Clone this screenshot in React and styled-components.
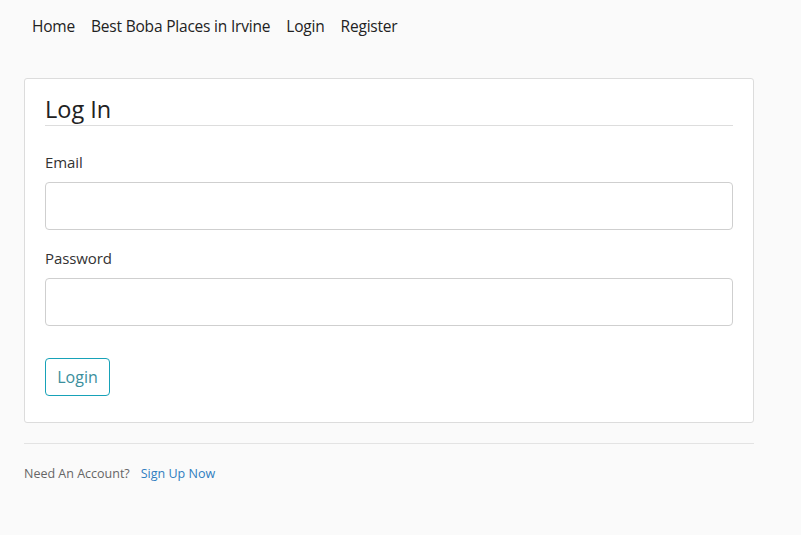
import React from "react";
import styled, { createGlobalStyle } from "styled-components";

const Global = createGlobalStyle`
  html, body { margin: 0; padding: 0; background: #fafafa; }
  body { font-family: "Open Sans", "Noto Sans", sans-serif; color: #212529; }
  * { box-sizing: border-box; }
`;

const Page = styled.div`
  padding: 0 47px 0 24px;
  width: 801px;
`;

const Nav = styled.nav`
  display: flex;
  gap: 16px;
  padding: 15px 0 0 8px;
  height: 52px;
`;

const NavLink = styled.a`
  font-size: 15.5px;
  color: #222;
  text-decoration: none;
  line-height: 22px;
  letter-spacing: -0.2px;
`;

const Card = styled.div`
  margin-top: 26px;
  background: #fff;
  border: 1px solid #dcdcdc;
  border-radius: 3px;
  padding: 14px 20px 26px 20px;
  width: 730px;
`;

const Title = styled.h1`
  margin: 0;
  font-size: 23.5px;
  font-weight: 400;
  color: #222;
  line-height: 32px;
  padding-bottom: 0;
  margin-bottom: 1px;
  border-bottom: 1px solid #ddd;
  letter-spacing: 0;
`;

const Field = styled.div`
  display: flex;
  flex-direction: column;
  margin-top: ${(p) => p.$top}px;
`;

const Label = styled.label`
  font-size: 15px;
  color: #333;
  line-height: 20px;
  margin-bottom: 10px;
  letter-spacing: -0.1px;
`;

const Input = styled.input`
  height: 48px;
  width: 100%;
  border: 1px solid #cfcfcf;
  border-radius: 4px;
  background: #fff;
  font-size: 15px;
  padding: 0 12px;
  outline: none;
`;

const Button = styled.button`
  margin-top: 32px;
  height: 38px;
  width: 65px;
  border: 1px solid #17a2b8;
  border-radius: 4px;
  background: #fff;
  color: #3b8f9d;
  font-family: inherit;
  font-size: 16px;
  padding: 0;
  cursor: pointer;
`;

const Rule = styled.hr`
  margin: 20px 0 0 0;
  width: 730px;
  border: 0;
  border-top: 1px solid #e3e3e3;
`;

const Footer = styled.div`
  display: flex;
  gap: 11px;
  margin-top: 21px;
  font-size: 12.5px;
  line-height: 18px;
`;

const Muted = styled.span`
  color: #666;
`;

const FooterLink = styled.a`
  color: #2f7dc0;
  text-decoration: none;
`;

export default function App() {
  return (
    <>
      <Global />
      <Page>
        <Nav>
          <NavLink href="#">Home</NavLink>
          <NavLink href="#">Best Boba Places in Irvine</NavLink>
          <NavLink href="#">Login</NavLink>
          <NavLink href="#">Register</NavLink>
        </Nav>
        <Card>
          <Title>Log In</Title>
          <Field $top={26}>
            <Label>Email</Label>
            <Input type="email" />
          </Field>
          <Field $top={18}>
            <Label>Password</Label>
            <Input type="password" />
          </Field>
          <Button>Login</Button>
        </Card>
        <Rule />
        <Footer>
          <Muted>Need An Account?</Muted>
          <FooterLink href="#">Sign Up Now</FooterLink>
        </Footer>
      </Page>
    </>
  );
}
